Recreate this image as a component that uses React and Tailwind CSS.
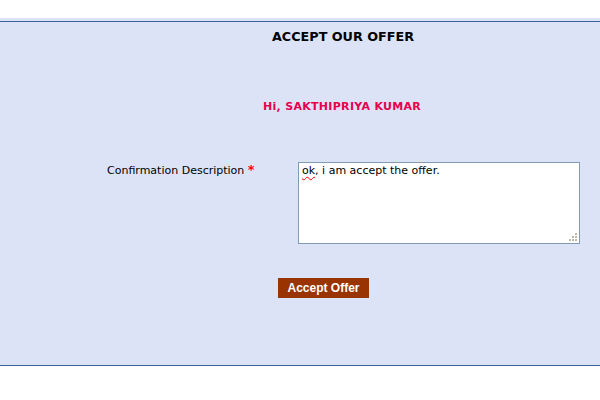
export default function App() {
  const font = { fontFamily: '"DejaVu Sans", Verdana, sans-serif' }
  return (
    <div className="min-h-[400px] w-[600px] bg-white" style={font}>
      <div className="h-[18px]" />
      <div className="bg-[#dce3f7] pt-[3px]">
        <div className="flex h-[345px] flex-col border-y border-[#3b6598]">
          <div className="pl-[272px] pt-[7px] text-[12.75px] font-bold leading-[16px] text-black">
            ACCEPT OUR OFFER
          </div>
          <div className="mt-[55px] pl-[263px] text-[11px] font-bold leading-[14px] tracking-[0.3px] text-[#e6004c]">
            Hi, SAKTHIPRIYA KUMAR
          </div>

          <div className="mt-[48px] flex">
            <div className="w-[298px] pl-[107px] pt-[1px] text-[11px] leading-[14px] text-black">
              Confirmation Description <span className="text-[13px] font-bold text-[#ff0000]">*</span>
            </div>
            <div className="relative h-[82px] w-[282px] border border-[#7f9db9] bg-white px-[3px] pt-[1px] text-[11px] leading-[14px] text-black">
              <span className="underline decoration-[#ff0000] decoration-wavy decoration-1 underline-offset-2">ok</span>, i am accept the offer.
              <svg className="absolute bottom-[2px] right-[2px]" width="10" height="10" viewBox="0 0 10 10">
                <rect x="8" y="2" width="2" height="2" fill="#bdb9ac" />
                <rect x="5" y="5" width="2" height="2" fill="#bdb9ac" />
                <rect x="8" y="5" width="2" height="2" fill="#bdb9ac" />
                <rect x="2" y="8" width="2" height="2" fill="#bdb9ac" />
                <rect x="5" y="8" width="2" height="2" fill="#bdb9ac" />
                <rect x="8" y="8" width="2" height="2" fill="#bdb9ac" />
              </svg>
            </div>
          </div>

          <div className="mt-[31px] pl-[278px]">
            <button
              className="h-[20px] w-[91px] bg-[#993300] text-[12px] font-bold leading-[20px] text-white"
              style={{ fontFamily: '"Liberation Sans", Arial, sans-serif' }}
            >
              Accept Offer
            </button>
          </div>
        </div>
      </div>
    </div>
  )
}
